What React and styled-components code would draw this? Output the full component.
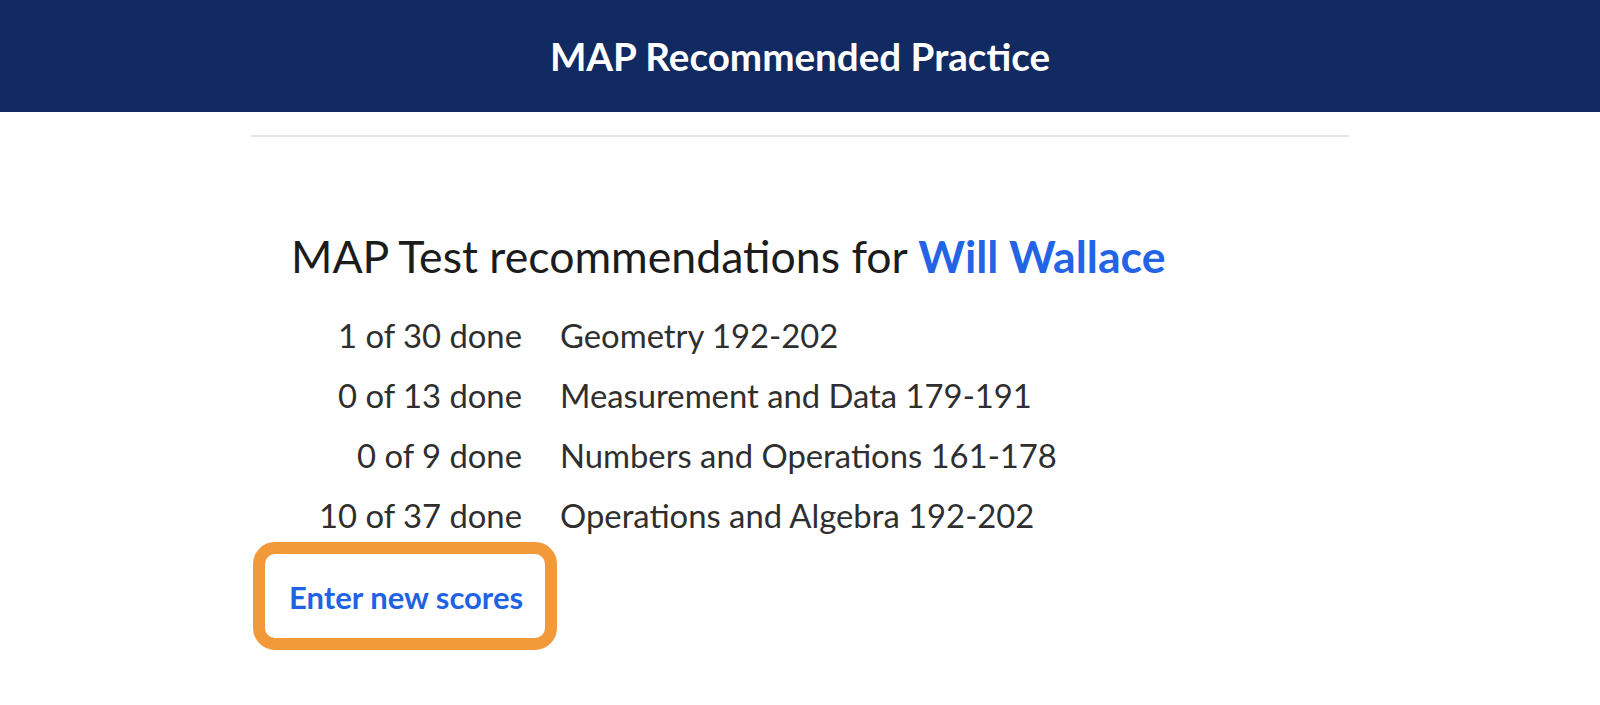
import styled, { createGlobalStyle } from "styled-components";

const GlobalStyle = createGlobalStyle`
  html, body {
    margin: 0;
    padding: 0;
    background: #ffffff;
    font-family: Lato, "Open Sans", sans-serif;
    color: #2b2b2b;
  }
`;

const Header = styled.header`
  height: 112px;
  background-color: #112a61;
  display: flex;
  align-items: center;
  justify-content: center;
`;

const HeaderTitle = styled.h1`
  margin: 0;
  font-size: 38.6px;
  font-weight: 700;
  line-height: 1.2;
  color: #ffffff;
`;

const Container = styled.main`
  width: 1098px;
  margin: 0 auto;
  padding-top: 23px;
`;

const Divider = styled.hr`
  margin: 0;
  border: none;
  height: 2px;
  background-color: #e4e4e4;
`;

const Content = styled.section`
  padding: 92px 40px 40px;
`;

const Title = styled.h2`
  margin: 0;
  font-size: 44.6px;
  font-weight: 400;
  line-height: 1.2;
  color: #1c1c1c;
`;

const Student = styled.span`
  font-weight: 700;
  color: #2264e5;
`;

const List = styled.div`
  margin-top: 33px;
  display: grid;
  grid-template-columns: 231px auto;
  column-gap: 38px;
  row-gap: 20px;
  font-size: 32.8px;
  line-height: 40px;
  color: #2f2f2f;
`;

const Progress = styled.span`
  text-align: right;
`;

const Subject = styled.span``;

const Highlight = styled.div`
  display: inline-flex;
  align-items: center;
  height: 80px;
  margin: 6px 0 0 -38px;
  padding: 4px 22px 0 24px;
  box-sizing: content-box;
  border: 12px solid #f29a3a;
  border-radius: 22px;
`;

const Link = styled.a`
  font-size: 31px;
  font-weight: 700;
  line-height: 1.2;
  color: #1f63e4;
  text-decoration: none;
  cursor: pointer;
`;

const recommendations = [
  { done: 1, total: 30, subject: "Geometry 192-202" },
  { done: 0, total: 13, subject: "Measurement and Data 179-191" },
  { done: 0, total: 9, subject: "Numbers and Operations 161-178" },
  { done: 10, total: 37, subject: "Operations and Algebra 192-202" },
];

const App = () => {
  return (
    <>
      <GlobalStyle />
      <Header>
        <HeaderTitle>MAP Recommended Practice</HeaderTitle>
      </Header>
      <Container>
        <Divider />
        <Content>
          <Title>
            MAP Test recommendations for <Student>Will Wallace</Student>
          </Title>
          <List>
            {recommendations.map((r) => [
              <Progress key={r.subject + "-p"}>
                {r.done} of {r.total} done
              </Progress>,
              <Subject key={r.subject}>{r.subject}</Subject>,
            ])}
          </List>
          <Highlight>
            <Link>Enter new scores</Link>
          </Highlight>
        </Content>
      </Container>
    </>
  );
};

export default App;
